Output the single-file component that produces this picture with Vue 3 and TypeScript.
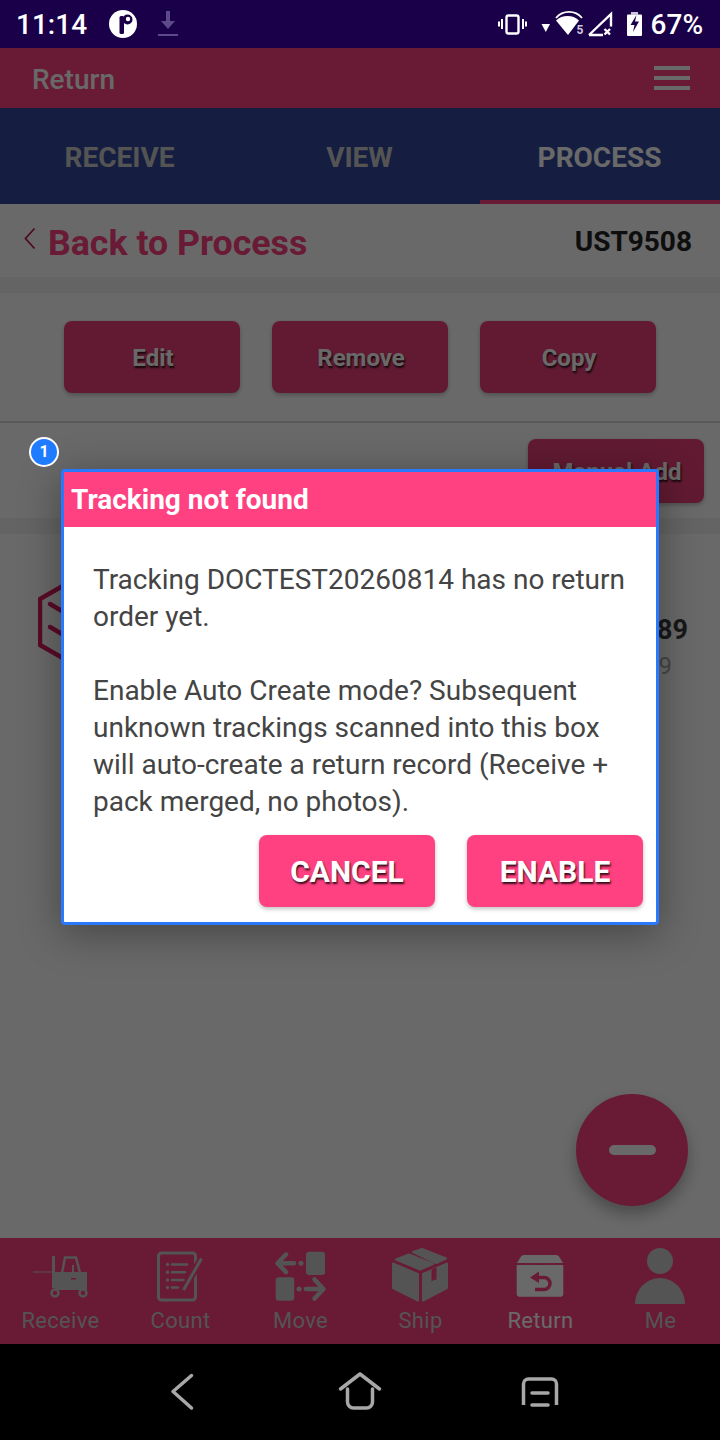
<script setup lang="ts">
const tabs = [
  { label: 'RECEIVE', active: false },
  { label: 'VIEW', active: false },
  { label: 'PROCESS', active: true },
]
const actions = ['Edit', 'Remove', 'Copy']
</script>

<template>
  <div class="phone">
    <!-- status bar -->
    <div class="status">
      <span class="clock">11:14</span>
      <svg class="st-app" width="30" height="30" viewBox="0 0 30 30">
        <circle cx="15" cy="15" r="14" fill="#fff" />
        <rect x="11.500" y="7" width="4.500" height="18" rx="1.500" fill="#1a0049" />
        <circle cx="19.500" cy="10.500" r="5" fill="#1a0049" />
        <circle cx="20" cy="10" r="2.200" fill="#fff" />
      </svg>
      <svg class="st-dl" width="20" height="28" viewBox="0 0 20 28">
        <path d="M8 1h4v10h5l-7 8-7-8h5z" fill="#5c4a8a" />
        <rect x="0" y="24" width="20" height="2" fill="#5c4a8a" />
      </svg>
      <span class="st-gap"></span>
      <svg width="146" height="30" viewBox="499 9 146 30">
        <rect x="507.500" y="15.500" width="12" height="18" rx="2" fill="none" stroke="#fff" stroke-width="2.400" />
        <path d="M503 19v10M500 21.500v5M524 19v10M527 21.500v5" stroke="#fff" stroke-width="2" />
        <path d="M542.500 24h8.500l-4.200 8z" fill="#fff" />
        <path d="M557 18a17 17 0 0 1 26 0" fill="none" stroke="#fff" stroke-width="1.800" />
        <path d="M557 20.500a17 17 0 0 1 23 0l-11 14.500z" fill="#fff" />
        <text x="577.500" y="33.500" class="st-five">5</text>
        <path d="M590 35L612 14v12.500M590 35h14" fill="none" stroke="#fff" stroke-width="2.400" />
        <path d="M605.500 29l5.500 5.500M611 29l-5.500 5.500" stroke="#fff" stroke-width="2.400" />
        <rect x="628" y="14.500" width="15" height="21.500" rx="1" fill="#fff" />
        <rect x="632" y="12" width="7" height="3" fill="#cfc8dc" />
        <path d="M637.500 15l-6 10h4l-1.500 7 6-10.500h-4z" fill="#1a0049" />
      </svg>
      <span class="pct">67%</span>
    </div>

    <div class="app">
      <header class="appbar">
        <span>Return</span>
        <div class="burger"><i></i><i></i><i></i></div>
      </header>

      <nav class="tabs">
        <div v-for="t in tabs" :key="t.label" class="tab" :class="{ on: t.active }">{{ t.label }}</div>
      </nav>

      <div class="back">
        <svg width="12" height="24" viewBox="0 0 12 24">
          <path d="M10.500 1.500L1.500 11.500l9 10" fill="none" stroke="#c2185b" stroke-width="1.800" />
        </svg>
        <span class="back-t">Back to Process</span>
        <span class="code">UST9508</span>
      </div>

      <div class="band"></div>

      <div class="actions">
        <button v-for="a in actions" :key="a" class="btn">{{ a }}</button>
      </div>

      <div class="manual">
        <button class="btn">Manual Add</button>
      </div>

      <div class="band"></div>

      <div class="list">
        <svg width="74" height="90" viewBox="38 578 74 90">
          <path d="M75 580l35 20v46l-35 20-35-20v-46z" fill="none" stroke="#d81b60" stroke-width="4.500" stroke-linejoin="round" />
          <path d="M50 605l12 7M50 628l12 7" stroke="#d81b60" stroke-width="4.500" stroke-linecap="round" />
        </svg>
        <div class="meta">
          <div class="m1">89</div>
          <div class="m2">9</div>
        </div>
      </div>

      <div class="fab"><i></i></div>

      <footer class="bottom">
        <div class="item">
          <svg viewBox="0 0 120 60">
            <path d="M33 26h20" stroke="#ccc" stroke-width="1" />
            <rect x="52" y="10" width="3" height="32" fill="#ccc" />
            <path d="M62 27L65 11.500H76L80 27" fill="none" stroke="#ccc" stroke-width="2.500" />
            <path d="M55 26H72V19h2v7H87V44H55z" fill="#ccc" />
            <rect x="71" y="32" width="5" height="1.500" fill="#ff4081" />
            <circle cx="55" cy="47" r="3.500" fill="#ff4081" stroke="#ccc" stroke-width="2.500" />
            <circle cx="83" cy="47" r="3.500" fill="#ff4081" stroke="#ccc" stroke-width="2.500" />
          </svg>
          <span>Receive</span>
        </div>
        <div class="item">
          <svg viewBox="0 0 120 60">
            <rect x="38.500" y="7" width="37" height="47" rx="3" fill="none" stroke="#ccc" stroke-width="3" />
            <g fill="#ccc">
              <circle cx="47.500" cy="18.500" r="1.700" />
              <circle cx="47.500" cy="26.300" r="1.700" />
              <circle cx="47.500" cy="34" r="1.700" />
              <circle cx="47.500" cy="41.500" r="1.700" />
            </g>
            <path d="M52 18.500h15M52 26.300h13M52 34h11.500M52 41.500h6" stroke="#ccc" stroke-width="2.500" stroke-linecap="round" />
            <path d="M81.500 12.500L63.500 44" stroke="#ff4081" stroke-width="7" />
            <path d="M81.500 12.500L63.500 44" stroke="#ccc" stroke-width="3" />
          </svg>
          <span>Count</span>
        </div>
        <div class="item">
          <svg viewBox="0 0 120 60">
            <rect x="66" y="5.700" width="19" height="23.300" rx="3" fill="#ccc" />
            <rect x="35.700" y="31.300" width="18.500" height="23.400" rx="3" fill="#ccc" />
            <g fill="none" stroke="#ccc" stroke-width="4.500" stroke-linecap="round" stroke-linejoin="round">
              <path d="M38 17.300h16M46 8.500l-8.500 8.800 8.500 8.800" />
              <path d="M66 43h17M74.500 33.500L83.500 43l-9 9.500" />
            </g>
            <circle cx="61" cy="17.300" r="2.500" fill="#ccc" />
            <circle cx="59" cy="43" r="2.500" fill="#ccc" />
          </svg>
          <span>Move</span>
        </div>
        <div class="item">
          <svg viewBox="0 0 120 60">
            <g fill="#ccc" stroke="#ccc" stroke-width="2" stroke-linejoin="round">
              <path d="M33 17.500l25 10.500V54.500L33 42z" />
              <path d="M63 28l24-10.500V42L63 54.500z" />
              <path d="M36 13.500L49 8.500 73 18 60 23.500z" />
              <path d="M53 6l9-3 24 9.500-10 4.500z" />
            </g>
            <path d="M71.500 23.500v12l3-2 2 .500V21.500z" fill="#ff4081" />
          </svg>
          <span>Ship</span>
        </div>
        <div class="item on">
          <svg viewBox="0 0 120 60">
            <path d="M43.500 9h33a3 3 0 0 1 2.500 1.500L83 17H37l4-6.500A3 3 0 0 1 43.500 9z" fill="#fff" />
            <path d="M36.700 19h46.600v28.700a3 3 0 0 1-3 3H39.700a3 3 0 0 1-3-3z" fill="#fff" />
            <path d="M50 31.500l9-6v11.500z" fill="#ff4081" />
            <path d="M57 31.500h7a6 6 0 0 1 0 12h-9" fill="none" stroke="#ff4081" stroke-width="3.500" />
          </svg>
          <span>Return</span>
        </div>
        <div class="item">
          <svg viewBox="0 0 120 60">
            <circle cx="60" cy="15" r="13" fill="#ccc" />
            <path d="M35 58a25 26 0 0 1 50 0z" fill="#ccc" />
          </svg>
          <span>Me</span>
        </div>
      </footer>

      <!-- modal layer -->
      <div class="overlay">
        <div class="badge">1</div>
        <div class="dialog">
          <div class="d-head">Tracking not found</div>
          <div class="d-body">
            <p>Tracking DOCTEST20260814 has no return order yet.</p>
            <p>Enable Auto Create mode? Subsequent unknown trackings scanned into this box will auto-create a return record (Receive + pack merged, no photos).</p>
          </div>
          <div class="d-btns">
            <button class="d-btn">CANCEL</button>
            <button class="d-btn">ENABLE</button>
          </div>
        </div>
      </div>
    </div>

    <!-- system nav -->
    <div class="sysnav">
      <svg width="720" height="96" viewBox="0 1344 720 96" fill="none" stroke="#a8a8a8" stroke-width="3.500" stroke-linecap="round" stroke-linejoin="round">
        <path d="M191.500 1375.500L173 1391.500l18.500 16.500" />
        <path d="M340.500 1389L360 1374l19.500 15M347.500 1389v13a6 6 0 0 0 6 6h13a6 6 0 0 0 6-6v-13" />
        <path d="M523.500 1405v-21a5 5 0 0 1 5-5h23a5 5 0 0 1 5 5v21" stroke-linecap="butt" />
        <path d="M532 1393h16M532 1405h16" />
      </svg>
    </div>
  </div>
</template>

<style scoped>
.phone {
  width: 720px;
  height: 1440px;
  display: flex;
  flex-direction: column;
  overflow: hidden;
  background: #fff;
  font-family: Roboto, "Liberation Sans", sans-serif;
}

.status {
  height: 48px;
  flex: none;
  display: flex;
  align-items: center;
  padding: 0 17px 0 16px;
  background: #1a0049;
  color: #fff;
  font-size: 28px;
  font-weight: 500;
  box-sizing: border-box;
}
.clock { width: 92px; }
.st-app { margin-right: 20px; }
.st-gap { flex: 1; }
.pct { margin-left: 7px; }
.st-five { font: 700 12px Roboto, sans-serif; fill: #cfc8dc; }

.app {
  position: relative;
  flex: 1;
  display: flex;
  flex-direction: column;
  min-height: 0;
}

.appbar {
  height: 60px;
  flex: none;
  display: flex;
  align-items: center;
  justify-content: space-between;
  padding: 0 30px 0 32px;
  background: #ff4081;
  color: #fff;
  font-size: 28px;
  font-weight: 500;
}
.appbar span { padding-top: 3px; }
.burger { display: flex; flex-direction: column; gap: 6px; }
.burger i { display: block; width: 36px; height: 4px; background: #fff; }

.tabs {
  height: 96px;
  flex: none;
  display: grid;
  grid-template-columns: repeat(3, 1fr);
  background: #334a9b;
}
.tab {
  display: flex;
  align-items: center;
  justify-content: center;
  padding: 6px 1px 0 0;
  font-size: 28px;
  font-weight: 700;
  color: #ccc;
  border-bottom: 4px solid transparent;
}
.tab.on { color: #fff; border-bottom-color: #ff4081; }

.back {
  height: 73px;
  flex: none;
  display: flex;
  align-items: center;
  padding: 0 28px 0 24px;
  background: #fff;
}
.back svg { margin-right: 12px; margin-bottom: 4px; }
.back-t { color: #ff4081; font-size: 35.700px; font-weight: 700; flex: 1; margin-top: 4px; }
.code { color: #222; font-size: 28px; font-weight: 700; margin-top: 2px; }

.band { height: 16px; flex: none; background: #f2f2f2; }

.actions {
  height: 130px;
  flex: none;
  box-sizing: border-box;
  display: flex;
  align-items: center;
  gap: 32px;
  padding: 0 64px;
  background: #fff;
  border-bottom: 2px solid #d8d8d8;
}
.btn {
  width: 176px;
  height: 72px;
  padding: 2px 0 0 2px;
  border: 0;
  border-radius: 8px;
  background: #eb4079;
  color: #fff;
  font: 700 24px Roboto, sans-serif;
  text-shadow: 1px 2px 2px rgba(0, 0, 0, .8);
  box-shadow: 0 2px 4px rgba(0, 0, 0, .25);
}

.manual {
  height: 95px;
  flex: none;
  box-sizing: border-box;
  display: flex;
  justify-content: flex-end;
  padding: 16px 16px 0 0;
  background: #fff;
}
.manual .btn { height: 64px; }

.list {
  flex: 1;
  display: flex;
  justify-content: space-between;
  padding: 43px 32px 0 38px;
  background: #fff;
}
.meta { text-align: right; padding-top: 38px; }
.m1 { color: #3a3a3a; font-size: 27px; font-weight: 700; line-height: 30px; }
.m2 { color: #aaa; font-size: 24px; line-height: 42px; padding-right: 16px; }

.fab {
  position: absolute;
  right: 32px;
  bottom: 138px;
  width: 112px;
  height: 112px;
  border-radius: 50%;
  background: #ff4081;
  display: flex;
  align-items: center;
  justify-content: center;
  box-shadow: 0 8px 16px rgba(0, 0, 0, .3);
}
.fab i { display: block; width: 47px; height: 10px; border-radius: 5px; background: #fff; }

.bottom {
  height: 106px;
  flex: none;
  display: grid;
  grid-template-columns: repeat(6, 1fr);
  background: #ff4081;
}
.item {
  display: flex;
  flex-direction: column;
  align-items: center;
  padding-top: 8px;
  color: #ccc;
  font-size: 22px;
}
.item svg { width: 120px; height: 60px; flex: none; display: block; }
.item span { line-height: 26px; margin-top: 2px; margin-left: 1px; letter-spacing: .3px; }
.item.on { color: #fff; }

.overlay {
  position: absolute;
  inset: 0;
  display: flex;
  align-items: center;
  justify-content: center;
  padding-top: 2px;
  background: rgba(0, 0, 0, .59);
}
.badge {
  position: absolute;
  left: 29px;
  top: 389px;
  width: 26px;
  height: 26px;
  border: 2.500px solid #fff;
  border-radius: 50%;
  background: #1f7bff;
  color: #fff;
  font-size: 16px;
  font-weight: 700;
  line-height: 26px;
  text-align: center;
}
.dialog {
  width: 598px;
  box-sizing: border-box;
  border: 3px solid #2979ff;
  border-radius: 4px;
  background: #fff;
  box-shadow: 0 8px 40px rgba(0, 0, 0, .35);
}
.d-head {
  height: 55px;
  display: flex;
  align-items: center;
  padding-left: 7px;
  background: #ff4081;
  color: #fff;
  font-size: 28px;
  font-weight: 700;
}
.d-body {
  padding: 34px 25px 15px 29px;
  color: #444;
  font-size: 28px;
  line-height: 37px;
}
.d-body p { margin: 0; }
.d-body p + p { margin-top: 37px; }
.d-btns {
  display: flex;
  justify-content: flex-end;
  gap: 32px;
  padding: 0 13px 15px;
}
.d-btn {
  width: 176px;
  height: 72px;
  padding: 0;
  border: 0;
  border-radius: 8px;
  background: #ff4081;
  color: #fff;
  font: 700 30px Roboto, sans-serif;
  text-shadow: 1px 2px 2px rgba(0, 0, 0, .8);
  box-shadow: 0 2px 4px rgba(0, 0, 0, .25);
}

.sysnav { height: 96px; flex: none; background: #000; }
.sysnav svg { display: block; }
</style>

<style>
html, body { margin: 0; background: #000; }
</style>
